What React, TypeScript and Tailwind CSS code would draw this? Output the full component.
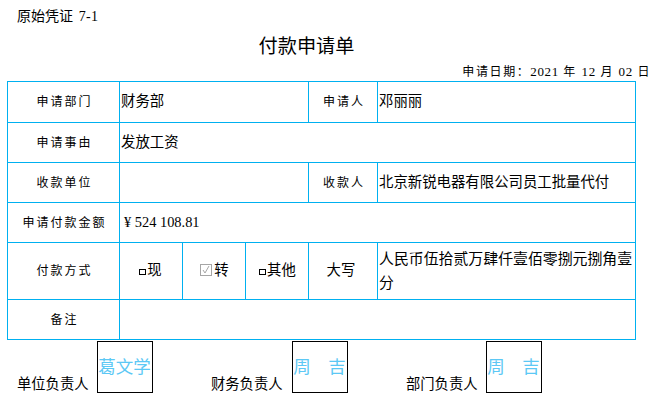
import React from "react";

const cjk = { fontFamily: '"Liberation Serif","Noto Sans CJK SC",serif' };

function Label({ children }: { children: React.ReactNode }) {
  return <td className="border border-[#00b0f0] pl-[2px] text-center text-[12px] tracking-[2px] text-black">{children}</td>;
}
function Val({ children, colSpan, className = "" }: { children?: React.ReactNode; colSpan?: number; className?: string }) {
  return <td colSpan={colSpan} className={`border border-[#00b0f0] pl-[1px] text-[14.4px] text-black ${className}`}>{children}</td>;
}
function Sign({ label, name, className = "", labelWidth = "w-[80px]" }: { label: string; name: string; className?: string; labelWidth?: string }) {
  return (
    <div className={`flex items-end ${className}`}>
      <span className={`${labelWidth} text-[14.3px] leading-[17px] text-black`}>{label}</span>
      <div className="box-border flex h-[52px] w-[56px] items-center justify-center whitespace-pre border border-black pr-[1px] pt-[2px] text-[17.5px] leading-none text-[#5cc8f5]">{name}</div>
    </div>
  );
}

export default function App() {
  return (
    <div className="h-[401px] w-[662px] overflow-hidden bg-white" style={cjk}>
      <div className="pl-[17px] pt-[8px] text-[14px] leading-[18px] text-black">
        原始凭证<span className="ml-[2px] tracking-[0.3px]"> 7-1</span>
      </div>
      <div className="mt-[8px] w-[613px] text-center text-[19.2px] leading-[26px] text-black">付款申请单</div>
      <div className="mt-[5px] pr-[11px] text-right text-[12px] leading-[14px] tracking-[1.6px] text-black">
        申请日期：<span className="text-[13px] tracking-[0.6px]">2021</span> 年 <span className="text-[13px] tracking-[0.6px]">12</span> 月 <span className="text-[13px] tracking-[0.6px]">02</span> 日
      </div>
      <table className="ml-[7px] mt-[2px] w-[628px] table-fixed border-collapse">
        <colgroup>
          <col className="w-[112px]" />
          <col className="w-[63px]" />
          <col className="w-[63px]" />
          <col className="w-[63px]" />
          <col className="w-[69px]" />
          <col className="w-[258px]" />
        </colgroup>
        <tbody>
          <tr className="h-[41px]">
            <Label>申请部门</Label>
            <Val colSpan={3}>财务部</Val>
            <Label>申请人</Label>
            <Val>邓丽丽</Val>
          </tr>
          <tr className="h-[40px]">
            <Label>申请事由</Label>
            <Val colSpan={5}>发放工资</Val>
          </tr>
          <tr className="h-[40px]">
            <Label>收款单位</Label>
            <Val colSpan={3} />
            <Label>收款人</Label>
            <Val>北京新锐电器有限公司员工批量代付</Val>
          </tr>
          <tr className="h-[40px]">
            <Label>申请付款金额</Label>
            <Val colSpan={5} className="pl-[4px]">¥ 524 108.81</Val>
          </tr>
          <tr className="h-[57px]">
            <Label>付款方式</Label>
            <Val className="pr-[2px] text-center">
              <span className="inline-flex items-center">
                <span className="mr-[1px] mt-[3px] inline-block h-[6px] w-[7px] border border-black" />现
              </span>
            </Val>
            <Val className="text-center">
              <span className="inline-flex items-center">
                <svg width="12" height="12" viewBox="0 0 12 12" className="mr-[2px] mb-[2px]" fill="none">
                  <rect x="0.5" y="0.5" width="11" height="11" stroke="#a6a6a6" />
                  <path d="M3 6l2 3 4-7" stroke="#a6a6a6" />
                </svg>转
              </span>
            </Val>
            <Val className="text-center">
              <span className="inline-flex items-center">
                <span className="mr-[1px] mt-[3px] inline-block h-[6px] w-[7px] border border-black" />其他
              </span>
            </Val>
            <Val className="pr-[5px] text-center">大写</Val>
            <Val className="text-[14.9px] leading-[24px]">人民币伍拾贰万肆仟壹佰零捌元捌角壹分</Val>
          </tr>
          <tr className="h-[40px]">
            <Label>备注</Label>
            <Val colSpan={5} />
          </tr>
        </tbody>
      </table>
      <div className="mt-[1px] flex pl-[17px]">
        <Sign label="单位负责人" name="葛文学" />
        <Sign label="财务负责人" name="周　吉" className="ml-[58px]" labelWidth="w-[81px]" />
        <Sign label="部门负责人" name="周　吉" className="ml-[58px]" />
      </div>
    </div>
  );
}
